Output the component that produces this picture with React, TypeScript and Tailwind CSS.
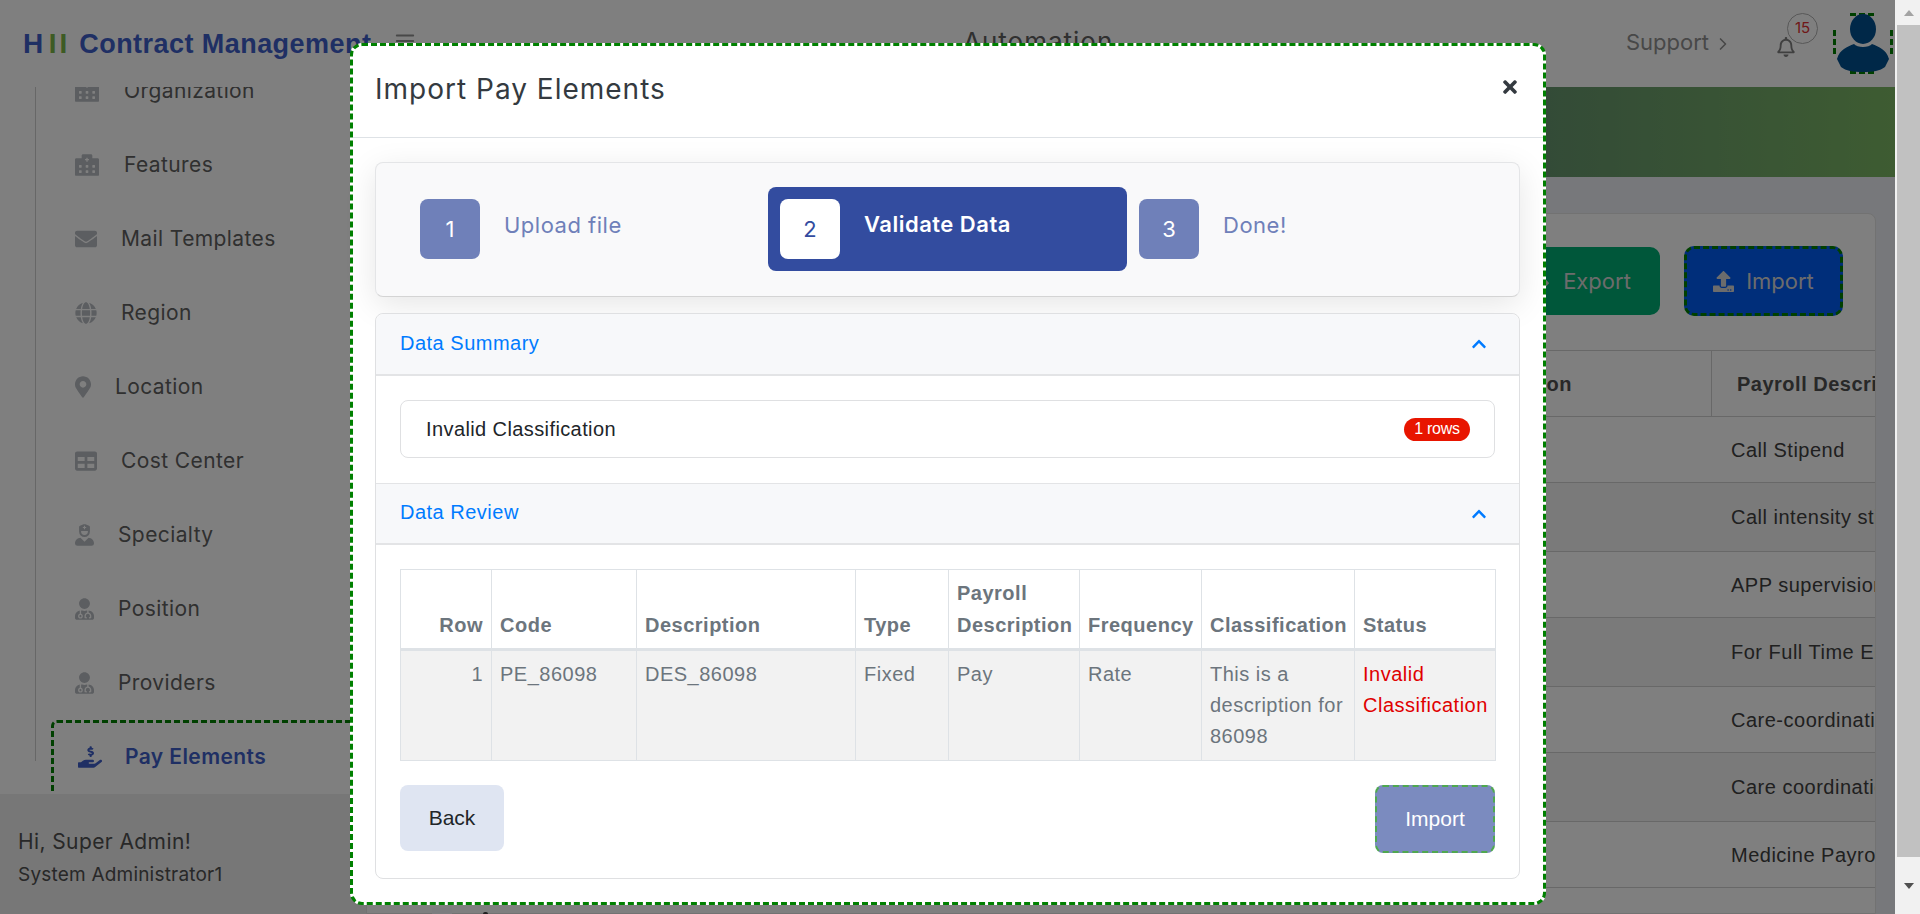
import {
  FaChevronUp,
  FaEnvelope,
  FaFileExport,
  FaGlobe,
  FaHandHoldingUsd,
  FaHospitalAlt,
  FaMapMarkerAlt,
  FaRegBell,
  FaTable,
  FaTimes,
  FaUpload,
  FaUserMd,
  FaUserNurse,
} from "react-icons/fa";
import { FiChevronRight, FiMenu } from "react-icons/fi";

const navItems = [
  { label: "Organization", icon: FaHospitalAlt, size: "w-[24px] h-[24px]", gap: "ml-[25px]" },
  { label: "Features", icon: FaHospitalAlt, size: "w-[24px] h-[24px]", gap: "ml-[25px]" },
  { label: "Mail Templates", icon: FaEnvelope, size: "w-[22px] h-[22px]", gap: "ml-[24px]" },
  { label: "Region", icon: FaGlobe, size: "w-[22px] h-[22px]", gap: "ml-[24px]" },
  { label: "Location", icon: FaMapMarkerAlt, size: "w-[16px] h-[22px]", gap: "ml-[24px]" },
  { label: "Cost Center", icon: FaTable, size: "w-[22px] h-[22px]", gap: "ml-[24px]" },
  { label: "Specialty", icon: FaUserNurse, size: "w-[19px] h-[22px]", gap: "ml-[24px]" },
  { label: "Position", icon: FaUserMd, size: "w-[19px] h-[22px]", gap: "ml-[24px]" },
  { label: "Providers", icon: FaUserMd, size: "w-[19px] h-[22px]", gap: "ml-[24px]" },
];

const payrollRows = [
  { text: "Call Stipend", cls: "h-[66px] bg-white" },
  { text: "Call intensity stipend", cls: "h-[69px] bg-[#f4f4f4]" },
  { text: "APP supervision", cls: "h-[66px] bg-white" },
  { text: "For Full Time Employees", cls: "h-[69px] bg-[#f4f4f4]" },
  { text: "Care-coordination", cls: "h-[66px] bg-white" },
  { text: "Care coordination", cls: "h-[69px] bg-[#f4f4f4]" },
  { text: "Medicine Payroll", cls: "h-[66px] bg-white" },
];

const headers = [
  { label: "Row", cls: "w-[91px] text-right" },
  { label: "Code", cls: "w-[145px]" },
  { label: "Description", cls: "w-[219px]" },
  { label: "Type", cls: "w-[93px]" },
  { label: "Payroll Description", cls: "w-[131px]" },
  { label: "Frequency", cls: "w-[122px]" },
  { label: "Classification", cls: "w-[153px]" },
  { label: "Status", cls: "w-[141px]" },
];

const cells = [
  { text: "1", cls: "text-right" },
  { text: "PE_86098", cls: "" },
  { text: "DES_86098", cls: "" },
  { text: "Fixed", cls: "" },
  { text: "Pay", cls: "" },
  { text: "Rate", cls: "" },
  { text: "This is a description for 86098", cls: "" },
  { text: "Invalid Classification", cls: "text-[#e00000]" },
];

const Sidebar = () => (
  <aside className="w-[366px] shrink-0 flex flex-col bg-white overflow-hidden">
    <div className="flex-1 min-h-0 overflow-hidden pl-[35px]">
      <div className="border-l border-[#cfcfcf] pl-[15px] h-full">
        <div className="-mt-[33px]">
          {navItems.map((item) => (
            <div key={item.label} className="h-[74px] pl-[24px] flex items-center text-[21px] tracking-[0.4px] text-[#606060]">
              <item.icon className={`${item.size} text-[#b8bcc2] shrink-0`} />
              <span className={item.gap}>{item.label}</span>
            </div>
          ))}
          <div className="h-[90px] pl-[24px] pb-[16px] flex items-center text-[21px] tracking-[0.4px] font-semibold text-[#3f5fc8] border-[3px] border-dashed border-[#008000] rounded-md">
            <FaHandHoldingUsd className="w-[24px] h-[24px] shrink-0" />
            <span className="ml-[23px]">Pay Elements</span>
          </div>
        </div>
      </div>
    </div>
    <div className="h-[120px] shrink-0 bg-[#eeeeee] pl-[18px] pt-[33px] text-[#505050]">
      <p className="text-[21px] tracking-[0.4px] leading-[30px]">Hi, Super Admin!</p>
      <p className="text-[19px] tracking-[0.2px] leading-[30px] mt-[3px]">System Administrator1</p>
    </div>
  </aside>
);

const TopBar = () => (
  <header className="h-[87px] shrink-0 bg-white flex items-center relative">
    <div className="pl-[23px] flex items-baseline text-[27px] font-bold tracking-[0.45px] font-['Liberation_Sans',sans-serif] text-[#3f5fc8] w-[394px] whitespace-nowrap">
      <span className="text-[28px] mr-[5px]">H</span>
      <span className="text-[28px] text-[#7ab648] tracking-[3px] mr-[9px]">II</span>
      <span>Contract Management</span>
    </div>
    <FiMenu className="w-[22px] h-[22px] text-[#909090] -mt-[5px]" />
    <span className="absolute left-[963px] top-[22px] text-[26px] tracking-[1px] text-[#606060]">Automation</span>
    <div className="ml-auto flex items-center pr-[2px]">
      <span className="text-[22px] text-[#909090] -mt-[2px]">Support</span>
      <FiChevronRight className="w-[20px] h-[20px] ml-[4px] mr-[44px] text-[#909090]" />
      <div className="relative mr-[38px]">
        <FaRegBell className="w-[18px] h-[20px] text-[#808080] mt-[6px]" />
        <span className="absolute left-[10px] -top-[18px] w-[31px] h-[31px] rounded-full border border-[#b0b0b0] flex items-center justify-center text-[15px] text-[#e03030]">15</span>
      </div>
      <svg viewBox="0 0 60 61" className="w-[60px] h-[61px] block">
        <g stroke="#008000" strokeWidth="3" strokeDasharray="6 3" fill="none">
          <path d="M1.5 17V44" />
          <path d="M58.5 17V44" />
          <path d="M17 1.5H44" />
          <path d="M17 59.5H44" />
        </g>
        <ellipse cx="30" cy="16" rx="13" ry="15" fill="#005090" />
        <path d="M21 31 C24 35 36 35 39 31 C46 34 53 36 56 46 L52 54 C47 58 40 59 30 59 C20 59 13 58 8 54 L4 46 C7 36 14 34 21 31 Z" fill="#005090" />
      </svg>
    </div>
  </header>
);

const MainContent = () => (
  <main className="flex-1 min-w-0 bg-[#eef0f6] flex flex-col">
    <div className="h-[90px] shrink-0 bg-gradient-to-r from-[#2e246d] to-[#7cb864]" />
    <section className="mt-[36px] mr-[19px] flex-1 bg-white rounded-t-lg border border-[#e4e4e4] overflow-hidden">
      <div className="h-[136px] pt-[33px] pr-[32px] flex justify-end gap-[24px]">
        <button className="h-[68px] w-[160px] rounded-[10px] bg-[#00ae74] text-[#d8d8d8] text-[22px] flex items-center justify-center gap-[14px] pl-[2px]">
          <FaFileExport className="w-[18px] h-[22px]" />
          Export
        </button>
        <button className="h-[70px] w-[159px] -mt-[1px] rounded-[10px] bg-[#005cf4] border-[3px] border-dashed border-[#008000] text-[#d8d8d8] text-[22px] flex items-center justify-center gap-[12px]">
          <FaUpload className="w-[21px] h-[21px]" />
          Import
        </button>
      </div>
      <div className="grid grid-cols-[1fr_164px] h-[67px] border-y border-[#d0d0d0] items-center font-['Liberation_Sans',sans-serif] text-[20px] font-bold tracking-[0.5px] text-[#505050]">
        <span className="text-right pr-[139px]">Description</span>
        <span className="pl-[25px] border-l border-[#d0d0d0] h-full flex items-center whitespace-nowrap overflow-hidden">Payroll Description</span>
      </div>
      {payrollRows.map((row) => (
        <div key={row.text} className={`${row.cls} grid grid-cols-[1fr_164px] items-center border-b border-[#d0d0d0] font-['Liberation_Sans',sans-serif] text-[20px] tracking-[0.5px] text-[#404040]`}>
          <span />
          <span className="pl-[20px] whitespace-nowrap overflow-hidden">{row.text}</span>
        </div>
      ))}
    </section>
  </main>
);

const Step = ({ n, label, active, width }: { n: number; label: string; active?: boolean; width: string }) => (
  <div className={`${width} h-[84px] p-[12px] flex rounded-lg ${active ? "bg-[#334c9f] text-white font-semibold" : "text-[#6f80b9]"}`}>
    <div className={`w-[60px] h-[60px] rounded-lg flex items-center justify-center text-[22px] ${active ? "bg-white text-[#334c9f] font-normal" : "bg-[#6f80b9] text-white"}`}>
      {n}
    </div>
    <span className={`ml-[24px] leading-[30px] tracking-[0.5px] text-[22px] ${active ? "mt-[10px]" : "mt-[11px]"}`}>{label}</span>
  </div>
);

const AccordionHead = ({ title, first }: { title: string; first?: boolean }) => (
  <div className={`h-[62px] shrink-0 flex items-center justify-between pl-[24px] pr-[32px] bg-[#f7f8fa] border-b-2 border-[#e3e4e6] ${first ? "rounded-t-lg" : "border-t border-t-[#e3e4e6]"}`}>
    <span className={`text-[20px] tracking-[0.5px] font-['Liberation_Sans',sans-serif] text-[#007bff] ${first ? "-mt-[2px]" : "-mt-[4px]"}`}>{title}</span>
    <FaChevronUp className="w-[16px] h-[16px] text-[#007bff]" />
  </div>
);

const ImportModal = () => (
  <div className="absolute left-[350px] top-[43px] w-[1196px] h-[862px] bg-white rounded-xl border-[3px] border-dashed border-[#008000] flex flex-col">
    <div className="h-[92px] shrink-0 border-b border-[#dee2e6] flex items-center justify-between pl-[22px] pr-[23px]">
      <h2 className="text-[28px] tracking-[1px] text-[#343a40] -mt-[5px]">Import Pay Elements</h2>
      <FaTimes className="w-[20px] h-[20px] text-[#343a40] -mt-[10px]" />
    </div>
    <div className="flex-1 min-h-0 pt-[24px] pl-[22px] flex flex-col">
      <div className="h-[135px] shrink-0 w-[1145px] bg-[#f9f9fa] border border-[#e4e5e7] border-b-[#d4d4d4] rounded-lg pt-[24px] pl-[32px] flex shadow-[0_8px_32px_rgba(0,0,0,0.1)]">
        <Step n={1} label="Upload file" width="w-[360px]" />
        <Step n={2} label="Validate Data" active width="w-[359px]" />
        <Step n={3} label="Done!" width="w-[359px]" />
      </div>
      <div className="mt-[16px] w-[1145px] h-[566px] border border-[#dfe0e2] rounded-lg flex flex-col text-[#212529]">
        <AccordionHead title="Data Summary" first />
        <div className="h-[107px] shrink-0 pt-[24px] px-[24px]">
          <div className="h-[58px] rounded-lg border border-[#dfe0e2] pl-[25px] pr-[24px] flex items-center justify-between">
            <span className="text-[20px] tracking-[0.4px] font-['Liberation_Sans',sans-serif]">Invalid Classification</span>
            <span className="w-[66px] h-[23px] rounded-full bg-[#e81500] text-white text-[16px] tracking-[-0.3px] font-['Liberation_Sans',sans-serif] flex items-center justify-center">1 rows</span>
          </div>
        </div>
        <AccordionHead title="Data Review" />
        <div className="flex-1 min-h-0 pt-[24px] px-[24px] font-['Liberation_Sans',sans-serif]">
          <table className="table-fixed border-collapse w-[1095px] text-[20px] tracking-[0.5px] leading-[31px] text-[#6c757d]">
            <thead>
              <tr className="h-[80px] bg-white">
                {headers.map((h) => (
                  <th key={h.label} className={`${h.cls} border border-[#dee2e6] border-b-[3px] px-[8px] pb-[7px] leading-[32px] align-bottom font-bold text-left last:pr-0`}>
                    <span className={h.cls.includes("text-right") ? "block text-right" : ""}>{h.label}</span>
                  </th>
                ))}
              </tr>
            </thead>
            <tbody>
              <tr className="bg-[#f2f2f2] h-[111px]">
                {cells.map((c) => (
                  <td key={c.text} className={`${c.cls} border border-[#dee2e6] px-[8px] pt-[8px] align-top`}>
                    {c.text}
                  </td>
                ))}
              </tr>
            </tbody>
          </table>
          <div className="mt-[24px] flex justify-between items-start">
            <button className="w-[104px] h-[66px] rounded-lg bg-[#dfe5f2] text-[21px] text-[#212529]">Back</button>
            <button className="w-[120px] h-[68px] rounded-lg bg-[#7b8bbf] border-[2px] border-dashed border-[#4fa84f] text-[21px] text-white">Import</button>
          </div>
        </div>
      </div>
    </div>
  </div>
);

const Scrollbar = () => (
  <div className="w-[25px] shrink-0 bg-[#f1f1f1] flex flex-col pl-[2px] relative">
    <div className="h-[25px] flex items-center justify-center">
      <div className="w-0 h-0 border-x-[5px] border-x-transparent border-b-[6px] border-b-[#a3a3a3]" />
    </div>
    <div className="h-[832px] bg-[#c1c1c1]" />
    <div className="flex-1 flex items-center justify-center">
      <div className="w-0 h-0 border-x-[5px] border-x-transparent border-t-[6px] border-t-[#505050]" />
    </div>
  </div>
);

export default function App() {
  return (
    <div className="h-[914px] w-[1920px] flex overflow-hidden font-['Inter',sans-serif]">
      <div className="w-[1895px] shrink-0 relative flex flex-col">
        <div className="flex-1 min-h-0 flex flex-col pt-[87px]">
          <div className="flex-1 min-h-0 flex">
            <Sidebar />
            <MainContent />
          </div>
        </div>
        <div className="absolute inset-x-0 top-0">
          <TopBar />
        </div>
        {/* bits of the page that peek out under the modal */}
        <div className="absolute left-[432px] top-[908px] w-[20px] h-[6px] bg-[#fafaff]" />
        <div className="absolute left-[483px] top-[912px] w-[5px] h-[2px] rounded-t-full bg-[#404040]" />
        <div className="absolute inset-0 bg-black/50" />
        <ImportModal />
      </div>
      <Scrollbar />
    </div>
  );
}
